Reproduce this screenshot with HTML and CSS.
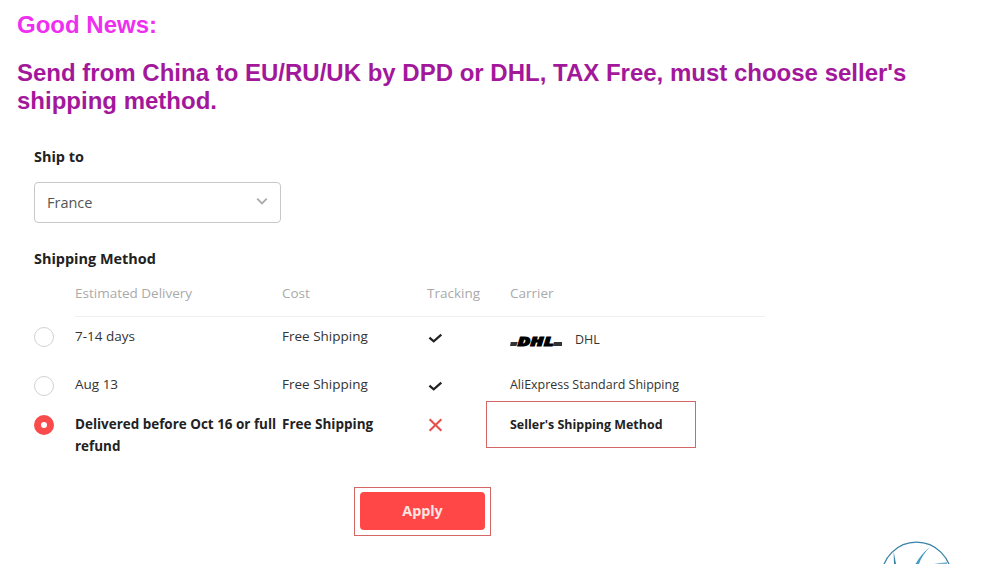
FILE: index.html
```html
<!doctype html>
<html lang="en">
<head>
  <meta charset="utf-8" />
  <meta name="viewport" content="width=device-width,initial-scale=1" />
  <title>Shipping Method</title>
  <link rel="stylesheet" href="styles.css">
</head>
<body>
  <header class="notice">
    <h2 class="news">Good News:</h2>
    <h2 class="info">Send from China to EU/RU/UK by DPD or DHL, TAX Free, must choose seller's shipping method.</h2>
  </header>

  <main class="shipping">
    <h3 class="ship-to">Ship to</h3>
    <div class="select">
      <span>France</span>
      <svg width="12" height="8" viewBox="0 0 12 8"><path d="M1.2 0.6 L6 5.4 L10.8 0.6" fill="none" stroke="#aaa" stroke-width="1.8"/></svg>
    </div>

    <h3 class="method-title">Shipping Method</h3>
    <div class="row head">
      <span class="delivery">Estimated Delivery</span>
      <span>Cost</span>
      <span>Tracking</span>
      <span>Carrier</span>
    </div>
    <div class="row first">
      <i class="radio"></i>
      <span class="delivery">7-14 days</span>
      <span class="cost">Free Shipping</span>
      <svg class="mark" width="16" height="16" viewBox="0 0 16 16"><path d="M2.4 7.6 L6.7 11.4 L14.3 4.6" fill="none" stroke="#222" stroke-width="2.2"/></svg>
      <span class="carrier dhl">
        <svg width="52" height="18" viewBox="0 0 52 18">
          <path d="M0.8 11 H7.8 L6.3 15 H0 Z M44 11 H52 V15 H42.8 Z" fill="#333"/>
          <text class="dhl-logo" x="7.5" y="14.7" textLength="36" lengthAdjust="spacingAndGlyphs">DHL</text>
        </svg>
        DHL
      </span>
    </div>
    <div class="row second">
      <i class="radio"></i>
      <span class="delivery">Aug 13</span>
      <span class="cost">Free Shipping</span>
      <svg class="mark" width="16" height="16" viewBox="0 0 16 16"><path d="M2.4 7.6 L6.7 11.4 L14.3 4.6" fill="none" stroke="#222" stroke-width="2.2"/></svg>
      <span class="carrier">AliExpress Standard Shipping</span>
    </div>
    <div class="row third">
      <i class="radio checked"></i>
      <span class="delivery">Delivered before Oct 16 or full refund</span>
      <span class="cost">Free Shipping</span>
      <svg class="mark" width="16" height="16" viewBox="0 0 16 16"><path d="M2.6 2.2 L14.4 13.8 M14.4 2.2 L2.6 13.8" fill="none" stroke="#e8504c" stroke-width="2.1"/></svg>
      <span class="carrier marked">Seller's Shipping Method</span>
    </div>

    <div class="apply-frame"><button class="apply">Apply</button></div>
  </main>

  <footer class="brand">
    <svg width="72" height="23" viewBox="0 0 72 23">
      <circle cx="35.5" cy="36" r="34.8" fill="none" stroke="#3a82a8" stroke-width="1.3"/>
      <path d="M12.6 10 L15 23 H13 Z" fill="#3a82a8"/>
      <path d="M49 6 Q40 13 34.5 23 H38 Q41 14 49 6 Z" fill="#4a9cc4"/>
      <path d="M66 21.2 Q58 21.6 53 23 H66 Z" fill="#7bb3d0"/>
    </svg>
  </footer>
</body>
</html>
```
FILE: styles.css
```css
*, *::after { box-sizing:border-box; }
html, body { margin:0; height:564px; overflow:hidden; background:#fff; }
body {
  display:flex; flex-direction:column;
  font-family:"Open Sans", "Noto Sans", sans-serif;
  font-size:13.5px; color:#333;
}
h2, h3 { margin:0; }

.notice { padding:11px 17px 0; font-family:"Liberation Sans", Arial, sans-serif; }
.notice h2 { font-size:24px; line-height:28px; }
.news { color:#ef2ff0; margin-bottom:20px; }
.info { color:#a3189b; }

.shipping { padding:32px 0 0 34px; }
.shipping h3 { font-size:14.45px; line-height:20px; color:#222; font-weight:700; }
.select {
  display:flex; align-items:center; justify-content:space-between;
  width:247px; height:41px; margin-top:15px; padding:0 12px 1px;
  border:1px solid #c8c8c8; border-radius:4px;
  font-size:14.5px; color:#555;
}
.shipping .method-title { margin-top:26px; }

/* Method list */
.row {
  display:grid; grid-template-columns:41px 207px 145px 83px 255px;
  width:731px; align-items:start; line-height:22px;
}
.head {
  grid-template-columns:207px 145px 83px 255px;
  width:690px; height:48px; margin-left:41px; padding-top:13px;
  border-bottom:1px solid #f0f0f0; color:#aaa;
}
.first { height:48px; padding-top:8px; }
.second { height:48px; padding-top:8px; }
.third { height:57px; font-weight:700; color:#222; }
.third .delivery { font-size:13.45px; }
.radio {
  width:20px; height:20px; margin-top:2px;
  border:1px solid #d2d2d2; border-radius:50%;
}
.second .radio { margin-top:3px; }
.radio.checked { border:7px solid #f94b4b; }
.mark { margin:5px 0 0; }
.third .mark { margin-top:4px; }
.carrier { font-size:12.45px; }
.second .carrier, .third .carrier { padding-top:1px; }
.dhl { display:flex; align-items:center; gap:13px; padding-top:4px; }
.dhl-logo { font:italic 900 13px "Open Sans", sans-serif; fill:#000; stroke:#000; stroke-width:1px; }
.marked { position:relative; }
.marked::after {
  content:""; position:absolute; left:-24px; top:-12px;
  width:210px; height:47px; border:1px solid #d46666;
}

.apply-frame {
  width:137px; height:49px; margin:17px 0 0 320px; padding:4px 5px;
  border:1px solid #d46666;
}
.apply {
  display:block; width:125px; height:38px; padding:0 0 1px;
  border:0; border-radius:4px; background:#ff4747;
  color:#ffe4e4; font:700 14.3px "Open Sans", sans-serif;
}

.brand { display:flex; justify-content:flex-end; height:23px; margin-top:auto; padding-right:47px; }
.brand svg { display:block; }
```
